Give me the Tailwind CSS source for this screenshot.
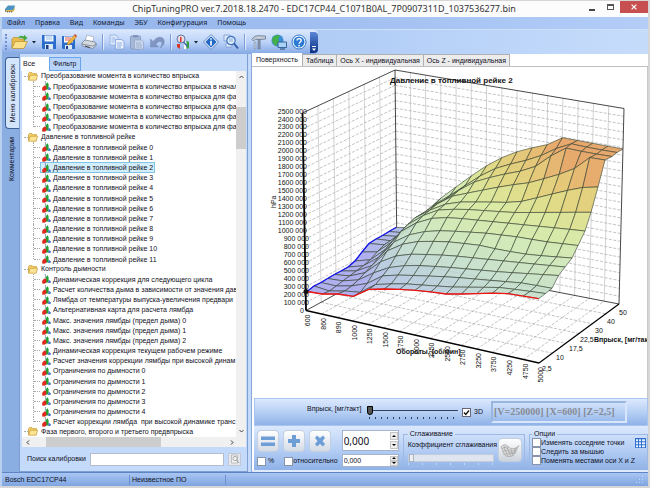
<!DOCTYPE html>
<html lang="ru">
<head>
<meta charset="utf-8">
<title>ChipTuningPRO</title>
<script src="https://cdn.jsdelivr.net/npm/@tailwindcss/browser@4"></script>
</head>
<body class="flex h-screen flex-col overflow-hidden border-r-2 border-b-2 border-t border-[#d6d6d6] bg-[#fcfcfc] font-['Liberation_Sans',Arial,sans-serif] text-[7px] leading-[10px] text-[#10101c]">

<svg class="hidden">
  <symbol id="folder" viewBox="0 0 10 9"><path d="M.5 8V1.5L1.5.6h2.6l1 1h3.4V3" fill="#f3cf6a" stroke="#c79a35" stroke-width=".7"/><path d="M.6 8.2 2.2 3.2h7.4L8.2 8.2Z" fill="#fbe493" stroke="#c79a35" stroke-width=".7"/></symbol>
  <symbol id="map" viewBox="0 0 9 10"><path d="M3.4 0v7" stroke="#7b8aa5" stroke-width=".8"/><path d="M4 3 5.400 1.200 6.600 3v5.400H4Z" fill="#1fa332"/><path d="M6.6 5.4 9 7.6 8.4 9H6.2Z" fill="#4a74c8"/><path d="M.2 6.800 2.200 4.600 4.400 5.200v3.400L2.6 9.8.2 9.6Z" fill="#de2a1c"/></symbol>
</svg>

<header class="flex h-4 shrink-0 items-center pl-1">
  <svg class="h-3 w-3" viewBox="0 0 12 12"><path d="M1 6 4 2.5h7L9.6 7H1Z" fill="#4c93c4"/><path d="M2 7h7l1.6-3v3L9 9H2Z" fill="#d8b552"/><path d="M1.5 7v2M3.5 8v1.6M5.5 8v1.6M7.500 8v1.600" stroke="#5b6570" stroke-width=".8"/></svg>
  <h1 class="flex-1 pl-12 text-center font-['Noto_Sans','Open_Sans',sans-serif] text-[9px] leading-4 text-[#333]">ChipTuningPRO ver.7.2018.18.2470 - EDC17CP44_C1071B0AL_7P0907311D_1037536277.bin</h1>
  <div class="flex h-full items-start">
    <button aria-label="Свернуть" class="flex h-3 w-4 items-end justify-center pb-0.5"><span class="h-0.5 w-1.5 bg-[#444]"></span></button>
    <button aria-label="Развернуть" class="flex h-3 w-5 items-center justify-center"><span class="h-[6px] w-[7px] border border-t-2 border-[#555]"></span></button>
    <button aria-label="Закрыть" class="flex h-3 w-7 items-center justify-center bg-[#c84f4f]"><svg class="h-[6px] w-[6px]" viewBox="0 0 6 6"><path d="M.6.6l4.800 4.800M5.400.6.6 5.400" stroke="#fff" stroke-width="1.200"/></svg></button>
  </div>
</header>

<div class="flex min-h-0 flex-1 flex-col border-l-2 border-[#b9cff0]">
<nav class="flex h-[13px] shrink-0 items-center gap-[10px] border-b border-[#cfe0fa] bg-linear-to-r from-[#8fb1ea] to-[#b3cdf7] pl-[5px] font-['Noto_Sans','Open_Sans',sans-serif] text-[7px] text-[#101a33]">
  <button>Файл</button><button>Правка</button><button>Вид</button><button>Команды</button><button>ЭБУ</button><button>Конфигурация</button><button>Помощь</button>
</nav>

<div role="toolbar" aria-label="Инструменты" class="flex h-6 shrink-0 bg-linear-to-r from-[#9bbcf0] to-[#c6dcfb]">
  <div class="flex items-center rounded-r-sm bg-linear-to-b from-[#dbe8fd] via-[#bcd3f8] to-[#85a8e4] pl-[3px]">
    <span class="mr-1 h-4 border-l-2 border-dotted border-[#6d8fce]"></span>
    <button aria-label="Открыть"><svg class="h-4 w-[18px]" viewBox="0 0 18 16"><path d="M1 14V5l1.500-1.500h4L8 5h5v3" fill="#e9bc4c" stroke="#b78b2c" stroke-width=".7"/><path d="M1 14.500 4 7.500h12.500L13 14.500Z" fill="#fbe08a" stroke="#b78b2c" stroke-width=".7"/><path d="M7 4C8 1.500 11 1 13 2.500V.8L16.500 4 13 7V5C11 3.600 9 3.500 7 4Z" fill="#45a83c"/></svg></button>
    <button aria-label="Последние файлы" class="w-[10px]"><svg class="mx-auto h-1 w-1" viewBox="0 0 4 4"><path d="M0 1h4L2 3.500Z" fill="#123"/></svg></button>
    <button aria-label="Сохранить" class="w-5"><svg class="mx-auto h-4 w-4" viewBox="0 0 16 16"><path d="M1 1h13l1 1v13H2L1 14Z" fill="#2a6dcd"/><path d="M3.500 1.500h9v6h-9Z" fill="#eef5fd"/><path d="M5 3h6M5 5h6" stroke="#8eb6dd" stroke-width=".8"/><path d="M4 10h8v5H4Z" fill="#dbe9f8"/><path d="M5 11h2.500v4H5Z" fill="#1c3f86"/></svg></button>
    <button aria-label="Сохранить как" class="w-5"><svg class="mx-auto h-4 w-4" viewBox="0 0 16 16"><path d="M1 2h13v13H2L1 14Z" fill="#2a6dcd"/><path d="M3 2.500h9v6H3Z" fill="#fff"/><path d="M4 4h6M4 6h5" stroke="#e0574c" stroke-width="1"/><path d="M4 11h7v4H4Z" fill="#dbe9f8"/><path d="M5 12h2v3H5Z" fill="#1c3f86"/><path d="m6 11 1-3 6.500-7L15.500 3 9 10Z" fill="#f0b63a" stroke="#a8661d" stroke-width=".5"/><path d="m13 1 1-1 2 2-1 1Z" fill="#d03c2c"/></svg></button>
    <button aria-label="Печать" class="w-5"><svg class="mx-auto h-4 w-4" viewBox="0 0 16 16"><path d="m4 7 2-6 7 2-1.500 5Z" fill="#fff" stroke="#8f9aab" stroke-width=".6"/><path d="M1 9 4 6l10 2 1.500 3-4 3.500L1 12Z" fill="#d5d9e0" stroke="#6d7686" stroke-width=".7"/><path d="M1 10l10.500 2 4-2" fill="none" stroke="#6d7686" stroke-width=".7"/><path d="m4 12 5 1.500" stroke="#3e4757" stroke-width="1"/></svg></button>
    <span class="mx-[3px] h-4 w-0.5 border-l border-[#7b9bd4] bg-white/60"></span>
    <button aria-label="Копировать" class="w-5" disabled><svg class="mx-auto h-4 w-4" viewBox="0 0 16 16"><path d="M1 1h6l2 2v8H1Z" fill="#dfeafb" stroke="#89aae0" stroke-width=".8"/><path d="M2.500 4h4M2.500 6h4M2.500 8h3" stroke="#89aae0" stroke-width=".8"/><path d="M6.500 5.500h6l2.500 2V15H6.500Z" fill="#e9f1fd" stroke="#7d9fd9" stroke-width=".8"/><path d="M8 9h5M8 11h5M8 13h4" stroke="#7d9fd9" stroke-width=".8"/></svg></button>
    <button aria-label="Вставить" class="w-5" disabled><svg class="mx-auto h-4 w-4" viewBox="0 0 16 16"><rect x="1.500" y="2" width="10" height="13" rx="1" fill="#a6b8d6" stroke="#8196bd" stroke-width=".8"/><path d="M4 1h5v2.500H4Z" fill="#8196bd"/><path d="M5.500 6h7l2 2v7h-9Z" fill="#cbd8ec" stroke="#8fa4c9" stroke-width=".7"/><path d="M7 9h5M7 11h6M7 13h6" stroke="#8fa4c9" stroke-width=".8"/></svg></button>
    <button aria-label="Отменить" class="w-5" disabled><svg class="mx-auto h-4 w-4" viewBox="0 0 16 16"><path d="M1.500 5v8h8L6.800 10.300C8.500 8 11 6.500 12.500 8c1 1.500 0 4-1.500 6 3.500-2 5-5.500 3.800-8.500C13 2 7.500 2.500 4.200 7.700Z" fill="#8196c2" stroke="#7286b4" stroke-width=".5"/></svg></button>
    <span class="mx-[3px] h-4 w-0.5 border-l border-[#7b9bd4] bg-white/60"></span>
    <button aria-label="График"><svg class="h-4 w-4" viewBox="0 0 16 16"><path d="M2 10h3v5L2 13Z" fill="#d93425"/><path d="M9 8h2.500v7H9Z" fill="#fff"/><path d="M11.500 6.500 14 8v6l-2.500 1Z" fill="#37a53b"/><circle cx="6" cy="5" r="4" fill="#f3dcdc" fill-opacity=".8" stroke="#5c76a8" stroke-width="1"/><path d="M5 3h1.500v5H5Z" fill="#d93425"/><path d="m8.500 8 4 4.500" stroke="#3f64a6" stroke-width="1.400"/></svg></button>
    <button aria-label="Вид графика" class="w-[10px]"><svg class="mx-auto h-1 w-1" viewBox="0 0 4 4"><path d="M0 1h4L2 3.500Z" fill="#123"/></svg></button>
    <button aria-label="Информация" class="w-5"><svg class="mx-auto h-4 w-4" viewBox="0 0 16 16"><path d="M8 .5 15.500 8 8 15.500.5 8Z" fill="#fff" stroke="#2b65b8" stroke-width=".8"/><path d="M8 2.300 13.700 8 8 13.700 2.300 8Z" fill="#2269c4"/><path d="M7.200 4.300h1.600v1.500H7.200ZM7.200 6.800h1.600v4.600H7.200Z" fill="#fff"/></svg></button>
    <button aria-label="Найти" class="w-5"><svg class="mx-auto h-4 w-4" viewBox="0 0 16 16"><path d="M1 1h6v6H1ZM3 9h6v4H3Z" fill="#dfe9fa" stroke="#6c8fcb" stroke-width=".7"/><circle cx="8" cy="6.500" r="4.200" fill="#dff0ff" stroke="#3f6fba" stroke-width="1.200"/><path d="M6 5h4M6 7h4" stroke="#6c8fcb" stroke-width=".8"/><path d="m11 9.500 4 5" stroke="#2e5ea9" stroke-width="2"/></svg></button>
    <span class="mx-[3px] h-4 w-0.5 border-l border-[#7b9bd4] bg-white/60"></span>
    <button aria-label="Настройки" class="w-5"><svg class="mx-auto h-4 w-4" viewBox="0 0 16 16"><path d="M7 4.500h2.200V15H7Z" fill="#8a98ac" stroke="#5c6a80" stroke-width=".5"/><path d="M2 4C4 1.500 7 1.500 9 1.800L14.500 2v3L9.500 5.500H6L4.500 5 2.500 7 1 5.500Z" fill="#c3ccd8" stroke="#5c6a80" stroke-width=".7"/><path d="M3.200 8h1.600v7H3.200Z" fill="#dde3ea" stroke="#67758c" stroke-width=".5"/></svg></button>
    <button aria-label="Интернет" class="w-5"><svg class="mx-auto h-4 w-4" viewBox="0 0 16 16"><circle cx="6.500" cy="6.500" r="6" fill="#3b8fd4"/><path d="M2 3C4 1 8 0 9 2L7 5l1 3-3 4C2 10 0 7 2 3Z" fill="#43b04a"/><path d="M7 8h8.500v5.500H7Z" fill="#a6d3f5" stroke="#32588c" stroke-width=".9"/><path d="M9 15h5" stroke="#32588c" stroke-width="1.200"/></svg></button>
    <button aria-label="Справка" class="w-5"><svg class="mx-auto h-4 w-4" viewBox="0 0 16 16"><circle cx="8" cy="8" r="7" fill="#fff" stroke="#2f77cc" stroke-width="1"/><circle cx="8" cy="8" r="5.500" fill="#2a7ad6"/><path d="M6 6.600C6 4 10.200 4 10.200 6.500 10.200 8 8.100 8 8.100 9.800" fill="none" stroke="#fff" stroke-width="1.400"/><circle cx="8.100" cy="11.600" r=".9" fill="#fff"/></svg></button>
    <button aria-label="Параметры панели" class="ml-px flex h-[21px] w-2 items-end justify-center rounded-r-sm bg-linear-to-b from-[#5c87d6] to-[#0a2f86] pb-0.5"><svg class="h-[5px] w-1" viewBox="0 0 4 5"><path d="M0 0h4v1H0ZM0 2.500h4L2 5Z" fill="#fff"/></svg></button>
  </div>
</div>

<main class="flex min-h-0 flex-1 bg-[#c4dafa]">
  <div role="tablist" aria-label="Панели" class="flex w-[17px] shrink-0 flex-col items-end bg-[#8aade2] pt-[3px] pl-[3px]">
    <button role="tab" aria-selected="true" class="flex w-full items-center justify-center rounded-l-sm border border-r-0 border-[#3f5f98] bg-[#d3e4fd] py-1.5"><span class="[writing-mode:vertical-rl] rotate-180">Меню калибровок</span></button>
    <button role="tab" aria-selected="false" class="flex w-full items-center justify-center py-2"><span class="[writing-mode:vertical-rl] rotate-180">Комментарии</span></button>
  </div>

  <section class="flex w-[37%] max-w-[229px] min-w-0 shrink-0 flex-col border-x border-b border-[#7f9fd2] bg-[#c4dafa] pt-[3px]">
    <div role="tablist" aria-label="Список" class="flex h-[14px] shrink-0 pl-px">
      <button role="tab" aria-selected="true" class="w-7 bg-white pl-0.5 text-left">Все</button>
      <button role="tab" aria-selected="false" class="border border-[#6aa5ec] bg-[#b7d3fa] px-[3px] leading-[8px]">Фильтр</button>
    </div>
    <div class="mr-px ml-0.5 flex min-h-0 flex-1 bg-white">
      <div class="flex min-w-0 flex-1 flex-col">
        <ul id="tree" role="tree" aria-label="Калибровки" class="grid min-h-0 flex-1 auto-rows-fr overflow-hidden"></ul>
      </div>
      <div class="flex w-[10px] shrink-0 flex-col items-center bg-[#f0f0f0]">
        <svg class="my-1 h-1 w-[5px]" viewBox="0 0 5 4"><path d="m.5 3 2-2 2 2" fill="none" stroke="#444"/></svg>
        <div class="h-[24px] w-full shrink"></div>
        <div class="h-[42px] w-full bg-[#cdcdcd]"></div>
        <svg class="mt-auto mb-1 h-1 w-[5px]" viewBox="0 0 5 4"><path d="m.5 1 2 2 2-2" fill="none" stroke="#444"/></svg>
      </div>
    </div>
    <div class="mr-px ml-0.5 flex h-[10px] shrink-0 items-center bg-[#f0f0f0] pr-3 pl-1">
      <svg class="h-[5px] w-1" viewBox="0 0 4 5"><path d="m3 .5-2 2 2 2" fill="none" stroke="#333"/></svg>
      <div class="ml-4 h-full w-[115px] bg-[#cdcdcd]"></div>
      <svg class="ml-auto h-[5px] w-1" viewBox="0 0 4 5"><path d="m1 .5 2 2-2 2" fill="none" stroke="#333"/></svg>
    </div>
    <div class="flex h-6 shrink-0 items-center gap-1 pr-[6px] pl-[7px]">
      <label for="search" class="shrink-0">Поиск калибровки</label>
      <input id="search" type="text" class="h-[13px] min-w-0 flex-1 border border-[#b5bccb] bg-white px-0.5">
      <button aria-label="Найти калибровку" class="flex h-[13px] w-[13px] items-center justify-center border border-[#c2c8d2] bg-[#e4e8ee]"><svg class="h-[10px] w-[10px]" viewBox="0 0 10 10"><path d="M1.500 1h6v8h-6Z" fill="#f5f5f5" stroke="#aaa" stroke-width=".7"/><circle cx="5" cy="4.500" r="2.200" fill="#eee" stroke="#999" stroke-width=".8"/><path d="m6.500 6 2.500 3" stroke="#999"/></svg></button>
    </div>
  </section>

  <section class="ml-[3px] flex min-w-0 flex-1 flex-col border-l border-[#8ba8d8] bg-white">
    <div role="tablist" aria-label="Представление" class="flex h-[13px] shrink-0 items-end border-b border-[#c0c0c0] leading-[11px]">
      <button role="tab" aria-selected="true" class="h-[13px] bg-white px-1">Поверхность</button>
      <button role="tab" aria-selected="false" class="h-[12px] border border-b-0 border-[#b0b0b0] bg-[#ececec] px-[3px]">Таблица</button>
      <button role="tab" aria-selected="false" class="h-[12px] border border-b-0 border-l-0 border-[#b0b0b0] bg-[#ececec] px-[3px]">Ось X - индивидуальная</button>
      <button role="tab" aria-selected="false" class="h-[12px] border border-b-0 border-l-0 border-[#b0b0b0] bg-[#ececec] px-[3px]">Ось Z - индивидуальная</button>
    </div>
    <div class="min-h-0 flex-1 border-r border-[#c8c8c8]">
      <svg id="chart" role="img" aria-label="Давление в топливной рейке 2" class="h-full w-full" viewBox="251 67 395 331"></svg>
    </div>

    <div class="ml-0.5 flex h-7 shrink-0 items-center border border-[#a9c4ee] bg-linear-to-b from-[#dce9fd] via-[#b7d0f5] to-[#8fb2e8] pr-5 pl-[52px]">
      <label for="inj" class="-mt-1.5 shrink-0">Впрыск, [мг/такт]</label>
      <div class="ml-1.5 flex min-w-0 flex-1 flex-col">
        <input id="inj" type="range" min="0" max="15" value="0" class="h-[10px] w-full appearance-none bg-transparent bg-[linear-gradient(#33405c,#33405c)] bg-[length:100%_1px] bg-center bg-no-repeat [&::-webkit-slider-thumb]:h-[9px] [&::-webkit-slider-thumb]:w-[6px] [&::-webkit-slider-thumb]:appearance-none [&::-webkit-slider-thumb]:rounded-b-full [&::-webkit-slider-thumb]:border [&::-webkit-slider-thumb]:border-black [&::-webkit-slider-thumb]:bg-[#555]">
        <div class="mx-[2px] mt-px h-0.5 bg-[repeating-linear-gradient(90deg,#33405c_0_1px,transparent_1px_6px)]"></div>
      </div>
      <label class="ml-1 flex items-center gap-[3px]"><span class="grid"><input type="checkbox" checked class="peer col-start-1 row-start-1 h-[9px] w-[9px] appearance-none border border-[#667] bg-white"><svg class="pointer-events-none invisible col-start-1 row-start-1 h-[9px] w-[9px] peer-checked:visible" viewBox="0 0 9 9"><path d="m2 4.500 1.800 2L7 2.500" fill="none" stroke="#111" stroke-width="1.300"/></svg></span>3D</label>
      <output class="ml-2 flex h-[22px] w-[136px] shrink-0 items-center border-2 border-t-[#9ab5de] border-r-[#d8e6fb] border-b-[#d8e6fb] border-l-[#9ab5de] pl-px font-['Liberation_Serif',serif] text-[10px] font-bold text-[#858a94]">[V=250000] [X=600] [Z=2,5]</output>
    </div>

    <div class="ml-0.5 flex h-11 shrink-0 gap-1 bg-linear-to-b from-[#dce9fd] via-[#b7d0f5] to-[#8fb2e8] pt-1 pb-[3px] pl-[3px]">
      <div class="flex shrink-0 flex-col justify-between">
        <div class="flex gap-1">
          <button aria-label="Присвоить" class="flex h-[22px] w-[22px] items-center justify-center rounded-sm border border-[#c3cedf] bg-linear-to-b from-white to-[#d4dbe6]"><svg class="h-4 w-4" viewBox="0 0 16 16"><path d="M1 3.500h14v3.500H1ZM1 9.500h14V13H1Z" fill="#6d9fd6"/></svg></button>
          <button aria-label="Прибавить" class="flex h-[22px] w-[22px] items-center justify-center rounded-sm border border-[#c3cedf] bg-linear-to-b from-white to-[#d4dbe6]"><svg class="h-4 w-4" viewBox="0 0 16 16"><path d="M6 2h4v4h4v4h-4v4H6v-4H2V6h4Z" fill="#6d9fd6"/></svg></button>
          <button aria-label="Умножить" class="flex h-[22px] w-[22px] items-center justify-center rounded-sm border border-[#c3cedf] bg-linear-to-b from-white to-[#d4dbe6]"><svg class="h-4 w-4" viewBox="0 0 16 16"><path d="m3 5 2-2.500L8 5l3-2.500L13 5l-2.500 3L13 11l-2 2.500L8 11l-3 2.500L3 11l2.500-3Z" fill="#6d9fd6"/></svg></button>
        </div>
        <div class="flex items-center gap-[10px] pb-px">
          <label class="flex items-center gap-0.5"><input type="checkbox" class="h-[9px] w-[9px] appearance-none border border-[#8a94a8] bg-white">%</label>
          <label class="flex items-center"><input type="checkbox" class="h-[9px] w-[9px] appearance-none border border-[#8a94a8] bg-white">относительно</label>
        </div>
      </div>
      <div class="flex w-[57px] shrink-0 flex-col justify-between">
        <div class="flex h-[21px] border border-[#a5b4cc] bg-white">
          <input aria-label="Значение" type="text" value="0,000" class="min-w-0 flex-1 pl-px font-['Noto_Sans',sans-serif] text-[10px]">
          <div class="flex w-2 flex-col justify-center gap-px"><button aria-label="Больше" class="flex h-2 items-center justify-center border border-[#c5c5c5] bg-[#eee]"><svg class="h-0.5 w-1" viewBox="0 0 4 2"><path d="M0 2 2 0l2 2Z"/></svg></button><button aria-label="Меньше" class="flex h-2 items-center justify-center border border-[#c5c5c5] bg-[#eee]"><svg class="h-0.5 w-1" viewBox="0 0 4 2"><path d="m0 0 2 2 2-2Z"/></svg></button></div>
        </div>
        <div class="flex h-[13px] border border-[#a5b4cc] bg-white">
          <input aria-label="Относительное значение" type="text" value="0,000" class="min-w-0 flex-1 pl-px">
          <div class="flex w-2 flex-col justify-center"><button aria-label="Больше" class="flex h-[5px] items-center justify-center border border-[#c5c5c5] bg-[#eee]"><svg class="h-0.5 w-1" viewBox="0 0 4 2"><path d="M0 2 2 0l2 2Z"/></svg></button><button aria-label="Меньше" class="flex h-[5px] items-center justify-center border border-[#c5c5c5] bg-[#eee]"><svg class="h-0.5 w-1" viewBox="0 0 4 2"><path d="m0 0 2 2 2-2Z"/></svg></button></div>
        </div>
      </div>
      <fieldset class="min-w-0 flex-1 border border-[#9fb9e3] pr-0.5 pl-1">
        <legend class="h-2 px-0.5 leading-[8px]">Сглаживание</legend>
        <div class="flex h-full w-full items-center justify-between gap-1">
          <div class="flex min-w-0 flex-1 flex-col">
            <label for="smooth" class="whitespace-nowrap">Коэффициент сглаживания</label>
            <input id="smooth" type="range" value="0" disabled class="mt-1 h-2 w-full appearance-none border border-[#c3ccdb] bg-[#dfe5ee] [&::-webkit-slider-thumb]:h-2 [&::-webkit-slider-thumb]:w-[5px] [&::-webkit-slider-thumb]:appearance-none [&::-webkit-slider-thumb]:border [&::-webkit-slider-thumb]:border-[#aab4c6] [&::-webkit-slider-thumb]:bg-[#eee]">
            <div class="mt-px h-0.5 bg-[repeating-linear-gradient(90deg,#ccd9ee_0_1px,transparent_1px_14px)]"></div>
          </div>
          <button aria-label="Сгладить" class="-mt-1 flex h-6 w-6 shrink-0 items-center justify-center rounded-sm border border-[#c3cedf] bg-linear-to-b from-white to-[#cdd3dc]"><svg class="h-5 w-5" viewBox="0 0 20 20" fill="none" stroke="#8c8c8c" stroke-width=".5"><path d="M1 7C3 4 6 4 8 6.500c3 3 7 3 11-1-2 2-2 5-4 8-2 3-6 4-10 2C3 14 3 10 1 7Z" fill="#dcdcdc"/><path d="M2 9c3-3 5-1 7 1 2 1.500 5 1 8-2M3 11.500c3-2 5-.5 7 1 2 .8 4 0 6-2M4 14c3-1 6 1 11-1M4 5.500c.5 4 2 7 4 11M7 6c.5 4 2 7 4 10.500M11 8.500c.5 3 1 5 2 7M15 8c-.5 2-.5 4 0 5"/></svg></button>
        </div>
      </fieldset>
      <fieldset class="w-[113px] shrink-0 border border-[#9fb9e3] pr-px pl-0.5">
        <legend class="h-2 px-0.5 leading-[8px]">Опции</legend>
        <div class="flex w-full justify-between">
          <div class="flex flex-col justify-between">
            <label class="flex items-center whitespace-nowrap leading-[9px]"><input type="checkbox" class="h-[9px] w-[9px] appearance-none border border-[#8a94a8] bg-white">Изменять соседние точки</label>
            <label class="flex items-center whitespace-nowrap leading-[9px]"><input type="checkbox" class="h-[9px] w-[9px] appearance-none border border-[#8a94a8] bg-white">Следить за мышью</label>
            <label class="flex items-center whitespace-nowrap leading-[9px]"><input type="checkbox" class="h-[9px] w-[9px] appearance-none border border-[#8a94a8] bg-white">Поменять местами оси X и Z</label>
          </div>
          <button aria-label="Сетка" class="h-[10px] w-[11px] shrink-0"><svg class="h-[10px] w-[11px]" viewBox="0 0 11 10"><path d="M0 0h11v10H0Z" fill="#2f6fd0"/><path d="M1 1.200h2v2H1ZM4 1.200h2v2H4ZM7 1.200h3v2H7ZM1 4.200h2v2H1ZM4 4.200h2v2H4ZM7 4.200h3v2H7ZM1 7.200h2v2H1ZM4 7.200h2v2H4ZM7 7.200h3v2H7Z" fill="#e8f2ff"/></svg></button>
        </div>
      </fieldset>
    </div>
    <div class="h-0.5 shrink-0 bg-[#dfeafc]"></div>
  </section>
</main>

<footer class="flex h-[14px] shrink-0 items-center border-t border-[#5f84c4] bg-linear-to-b from-[#a9c6f3] to-[#7ea4e0] pl-[3px]">
  <span class="w-[125px] border-r border-[#6d91cd]">Bosch EDC17CP44</span>
  <span class="w-[96px] border-r border-[#6d91cd] pl-0.5">Неизвестное ПО</span>
  <svg class="mr-1 ml-auto h-2 w-2" viewBox="0 0 8 8"><path d="M6 0h1v1H6ZM6 3h1v1H6ZM3 3h1v1H3ZM6 6h1v1H6ZM3 6h1v1H3ZM0 6h1v1H0Z" fill="#c9dbf7"/></svg>
</footer>
</div>

<script>
const groups = [
  ['Преобразование момента в количество впрыска', [
    'Преобразование момента в количество впрыска в начал',
    ...Array(4).fill('Преобразование момента в количество впрыска для фа')]],
  ['Давление в топливной рейке', Array.from({length: 12}, (_, n) => 'Давление в топливной рейке ' + n)],
  ['Контроль дымности', [
    'Динамическая коррекция для следующего цикла',
    'Расчет количества дыма в зависимости от значения дав',
    'Лямбда от температуры выпуска-увеличения предвари',
    'Альтернативная карта для расчета лямбда',
    'Макс. значения лямбды (предел дыма) 0', 'Макс. значения лямбды (предел дыма) 1', 'Макс. значения лямбды (предел дыма) 2',
    'Динамическая коррекция текущем рабочем режиме',
    'Расчет значения коррекции лямбды при высокой динам',
    'Ограничения по дымности 0', 'Ограничения по дымности 1', 'Ограничения по дымности 2', 'Ограничения по дымности 3', 'Ограничения по дымности 4',
    'Расчет коррекции лямбда  при высокой динамике транс']],
  ['Фаза первого, второго и третьего предвпрыска', []],
];
let rows = '';
for (const [title, items] of groups) {
  rows += `<li role="treeitem" class="flex min-h-0 items-center pl-[2px]"><span class="w-1 shrink-0 border-t border-dotted border-[#aaa]"></span><button class="flex min-h-0 items-center gap-[3px] whitespace-nowrap"><svg class="h-[9px] w-[10px] shrink-0"><use href="#folder"/></svg>${title}</button></li>`;
  items.forEach((t, n) => {
    const pick = t === 'Давление в топливной рейке 2';
    const line = n === items.length - 1 ? 'h-1/2 self-start' : 'h-full';
    rows += `<li role="treeitem" aria-selected="${pick}" class="flex min-h-0 items-center pl-[11px]"><span class="${line} border-l border-dotted border-[#aaa]"></span><span class="w-[6px] shrink-0 border-t border-dotted border-[#aaa]"></span><button class="${pick ? 'border-[#7fc4e4] bg-[#d3eefb]' : 'border-transparent'} flex h-[11px] items-center gap-0.5 whitespace-pre border px-px leading-[9px]"><svg class="h-[10px] w-[9px] shrink-0"><use href="#map"/></svg>${t}</button></li>`;
  });
}
document.getElementById('tree').innerHTML = rows;

// Corners of the plot box: floor (b) and ceiling (t) for front-left, back-left, back-right, front-right.
const FL = {b: [305, 310.5], t: [301.5, 113]}, BL = {b: [396, 261], t: [394, 70]};
const BR = {b: [618, 304], t: [623, 108.5]}, FR = {b: [538, 363]};
const mix = (a, b, k) => [a[0] + (b[0] - a[0]) * k, a[1] + (b[1] - a[1]) * k];
const line = (a, b, attrs) => `<line x1="${a[0].toFixed(1)}" y1="${a[1].toFixed(1)}" x2="${b[0].toFixed(1)}" y2="${b[1].toFixed(1)}" ${attrs}/>`;
const dash = 'stroke="#9a9a9a" stroke-width=".6" stroke-dasharray="3 1.500"';
const solid = 'stroke="#b4b4b4" stroke-width=".6"';
let g = '';
for (let n = 1; n < 25; n++) {
  const l = mix(FL.b, FL.t, n / 25), m = mix(BL.b, BL.t, n / 25), r = mix(BR.b, BR.t, n / 25);
  g += line(l, m, dash) + line(m, r, dash);
}
for (let n = 1; n < 6; n++) {
  g += line(mix(FL.b, BL.b, n / 6), mix(FL.t, BL.t, n / 6), solid) + line(mix(FL.b, BL.b, n / 6), mix(FR.b, BR.b, n / 6), dash);
}
for (let n = 1; n < 15; n++) {
  g += line(mix(BL.b, BR.b, n / 15), mix(BL.t, BR.t, n / 15), solid) + line(mix(FL.b, FR.b, n / 15), mix(BL.b, BR.b, n / 15), dash);
}
const edge = 'stroke="#333" stroke-width=".9"';
g += line(FL.t, BL.t, edge) + line(BL.t, BR.t, edge) + line(BL.b, BL.t, edge) + line(BR.b, BR.t, edge) + line(FL.b, BL.b, edge) + line(BL.b, BR.b, edge);

// Each profile runs left to right at constant injection, front profile first.
const profiles = [
  [306,291.5,321.5,294,337,294,350,297.5,366,289.5,383,289,398,289.3,414,290.3,430,292,445,294,460,294,476,293.6,491,293.2,507,293.6,522,296,537.7,298.7],
  [313,286,328,291,344,291,358,293,374,284.5,400,283.5,450,287,500,287.5,544.5,293.5],
  [320,282.5,335,286,350,286,365,284,380,276,400,275,450,277,497,281,522,283,551,288.3],
  [326.5,278.5,341,281,357,280,372,273,390,267,410,265,450,267.5,500,272,557.5,275.5],
  [333.4,274.5,348,276,363,273.5,379,262,395,256,412,254,450,255.5,493,260,564,267],
  [340,271,355,271,371,265.5,386,251,402,244,420,241,450,242,480,245.5,500,250,530,255,571,258],
  [347,267,362,266,377,258,393,242,410,234,430,230.5,450,231,483,233,517,237,543,241.5,577,245.5],
  [354,261,369,260,384,250,399,232,415,223,432,218,450,217.5,490,221.5,550,227.5,584,231],
  [361,252,376,252,391,242,406,225,421,216,437,210,460,209,511,212.5,590,212.3],
  [368,243.5,383,245,398,235,412,219,428,210.5,450,202,480,202,516,202.5,533,198.5,549,194.5,565,190.7,581,187.5,597,187],
  [375,239,390,241,404,230,419,215,434,205,450,196.5,477,191,509,185,525,183.5,540,179.5,556,175,571.5,170,588,157.5,604,160],
  [381.5,235.5,396,237,411,226,426,211.5,441,202,455,192,470,183,483,179,499,175,514,172,530,169.5,546,158.5,562,147.5,579,151,595,154,611,156.5],
  [388,231.5,403,233,418,219.5,433,205,448,196,462,187,477,177,493,169,505,165,521,161.5,537,157,553,149.5,567,143,585,147,601,150,616,152.5],
  [395,227.5,410,227.5,425,211,440,198,455,187,470,176,485,166,500,158,515,152,530,148,544,146,559,137.3,574,140,590,143,606,146,622,149],
];
const grid = profiles.map(p => {
  const x0 = p[0], x1 = p[p.length - 2];
  return Array.from({length: 16}, (_, i) => {
    const x = x0 + (x1 - x0) * i / 15;
    let k = 0;
    while (k < p.length - 4 && x > p[k + 2]) k += 2;
    return [x, p[k + 1] + (p[k + 3] - p[k + 1]) * (x - p[k]) / (p[k + 2] - p[k])];
  });
});
const stops = [[350,[172,172,238]],[520,[180,198,226]],[760,[196,221,208]],[1000,[207,232,184]],[1250,[217,233,158]],[1480,[224,214,124]],[1700,[229,194,112]],[1880,[229,163,100]]];
const tint = v => {
  if (v <= stops[0][0]) return `rgb(${stops[0][1]})`;
  for (let k = 1; k < stops.length; k++) if (v <= stops[k][0]) {
    const f = (v - stops[k - 1][0]) / (stops[k][0] - stops[k - 1][0]);
    return `rgb(${stops[k][1].map((c, n) => Math.round(stops[k - 1][1][n] + (c - stops[k - 1][1][n]) * f))})`;
  }
  return `rgb(${stops[stops.length - 1][1]})`;
};
for (let j = 12; j >= 0; j--) for (let i = 0; i < 15; i++) {
  const q = [grid[j][i], grid[j][i + 1], grid[j + 1][i + 1], grid[j + 1][i]];
  const floor = mix(mix(FL.b, FR.b, (i + .5) / 15), mix(BL.b, BR.b, (i + .5) / 15), (j + .5) / 13)[1];
  const v = (floor - q.reduce((s, c) => s + c[1], 0) / 4) / 197 * 2500;
  g += `<polygon points="${q.map(c => c[0].toFixed(1) + ',' + c[1].toFixed(1)).join(' ')}" fill="${tint(v)}" fill-opacity=".95" stroke="#34402f" stroke-width=".6"/>`;
}
const poly = (pts, c) => `<polyline points="${pts.map(p => p.join(',')).join(' ')}" fill="none" stroke="${c}" stroke-width="1.300"/>`;
g += poly(grid.map(r => r[0]), '#1414f0') + poly(grid[0], '#f01414');
g += line(FL.b, FR.b, 'stroke="#000" stroke-width="1.400"') + line(FR.b, BR.b, 'stroke="#000" stroke-width="1.200"') + line(FL.b, FL.t, 'stroke="#000" stroke-width="1.800"');
g += '<circle cx="305" cy="291.500" r="2.500"/>';
for (let n = 0; n <= 25; n++) {
  const y = 310 - (310 - 111) * n / 25;
  g += `<text x="${n > 9 ? 306 : n ? 308 : 303}" y="${(y + 2.5).toFixed(1)}" text-anchor="end">${n ? (n * 100000).toString().replace(/(\d)(?=(\d{3})+$)/g, '$1 ').replace(/^(\d) (\d{3}) (\d{3})$/, '$1$2 $3') : '0'}</text>`;
}
[600,860,890,1000,1250,1500,1750,2000,2250,2500,2750,3250,3750,4250,4750,5000].forEach((v, i) => {
  const p = mix(FL.b, FR.b, i / 15);
  g += `<text transform="translate(${(p[0] + 4).toFixed(1)} ${(p[1] + 4).toFixed(1)}) rotate(-90)" text-anchor="end">${v}</text>`;
});
[['2,5',541,371],['10',555,360],['17,5',568,351],['22,5',579,342],['30',594,333],['40',606,324],['50',618,315]].forEach(([t, x, y]) => g += `<text x="${x}" y="${y}">${t}</text>`);
g += '<text x="593" y="342" font-weight="700">Впрыск, [мг/так</text><text x="395" y="354" font-weight="700">Обороты, [об/мин]</text>';
g += '<text transform="translate(275 208) rotate(-90)">hPa</text><text x="389" y="83" font-size="8" font-weight="700">Давление в топливной рейке 2</text>';
document.getElementById('chart').innerHTML = `<g font-size="7" fill="#111">${g}</g>`;
</script>
</body>
</html>
